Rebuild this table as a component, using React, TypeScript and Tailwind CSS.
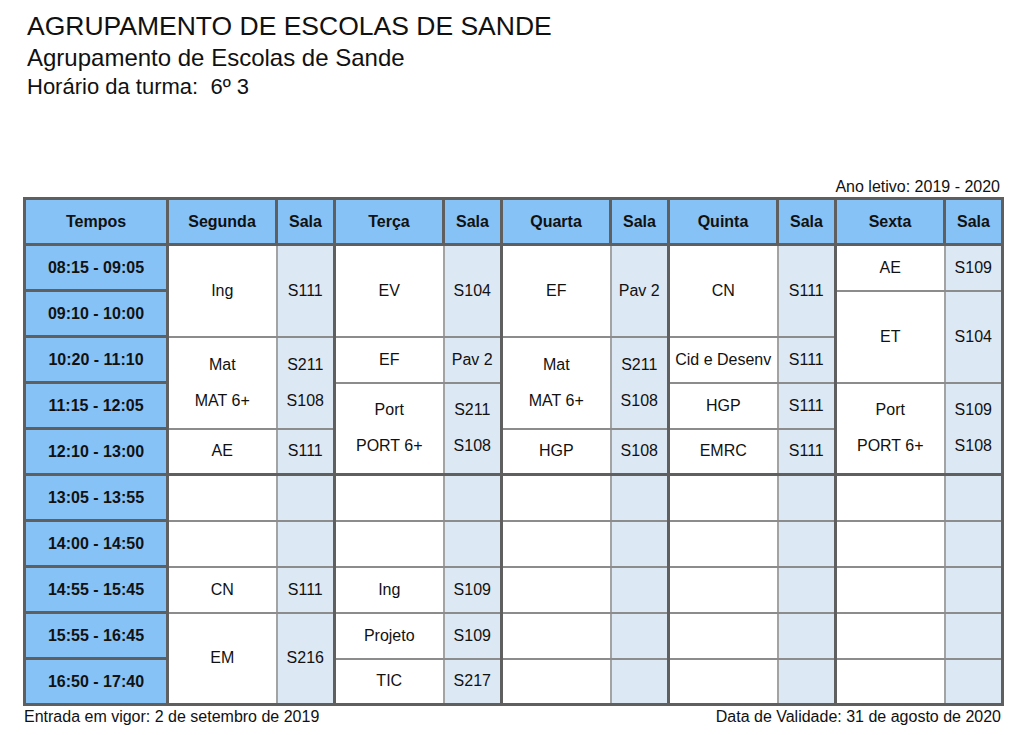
import React from 'react';

type Block = { span: number; s: string[]; r: string[] };
type Day = { name: string; blocks: Block[] };

const TIMES = [
  '08:15 - 09:05',
  '09:10 - 10:00',
  '10:20 - 11:10',
  '11:15 - 12:05',
  '12:10 - 13:00',
  '13:05 - 13:55',
  '14:00 - 14:50',
  '14:55 - 15:45',
  '15:55 - 16:45',
  '16:50 - 17:40',
];

const E = (span = 1): Block => ({ span, s: [], r: [] });

const DAYS: Day[] = [
  {
    name: 'Segunda',
    blocks: [
      { span: 2, s: ['Ing'], r: ['S111'] },
      { span: 2, s: ['Mat', 'MAT 6+'], r: ['S211', 'S108'] },
      { span: 1, s: ['AE'], r: ['S111'] },
      E(),
      E(),
      { span: 1, s: ['CN'], r: ['S111'] },
      { span: 2, s: ['EM'], r: ['S216'] },
    ],
  },
  {
    name: 'Terça',
    blocks: [
      { span: 2, s: ['EV'], r: ['S104'] },
      { span: 1, s: ['EF'], r: ['Pav 2'] },
      { span: 2, s: ['Port', 'PORT 6+'], r: ['S211', 'S108'] },
      E(),
      E(),
      { span: 1, s: ['Ing'], r: ['S109'] },
      { span: 1, s: ['Projeto'], r: ['S109'] },
      { span: 1, s: ['TIC'], r: ['S217'] },
    ],
  },
  {
    name: 'Quarta',
    blocks: [
      { span: 2, s: ['EF'], r: ['Pav 2'] },
      { span: 2, s: ['Mat', 'MAT 6+'], r: ['S211', 'S108'] },
      { span: 1, s: ['HGP'], r: ['S108'] },
      E(), E(), E(), E(), E(),
    ],
  },
  {
    name: 'Quinta',
    blocks: [
      { span: 2, s: ['CN'], r: ['S111'] },
      { span: 1, s: ['Cid e Desenv'], r: ['S111'] },
      { span: 1, s: ['HGP'], r: ['S111'] },
      { span: 1, s: ['EMRC'], r: ['S111'] },
      E(), E(), E(), E(), E(),
    ],
  },
  {
    name: 'Sexta',
    blocks: [
      { span: 1, s: ['AE'], r: ['S109'] },
      { span: 2, s: ['ET'], r: ['S104'] },
      { span: 2, s: ['Port', 'PORT 6+'], r: ['S109', 'S108'] },
      E(), E(), E(), E(), E(),
    ],
  },
];

// block starting at a given row, per day
function startsAt(day: Day, row: number) {
  let r = 0;
  for (const b of day.blocks) {
    if (r === row) return { b, end: r + b.span - 1 };
    r += b.span;
  }
  return null;
}

const Lines = ({ items }: { items: string[] }) => (
  <div className="flex flex-col items-center gap-[18px]">
    {items.map((t) => (
      <span key={t} className="leading-[18px]">{t}</span>
    ))}
  </div>
);

export default function App() {
  return (
    <div className="w-[1024px] h-[735px] bg-white text-[#111] font-['Liberation_Sans',Arial,sans-serif]">
      <div className="pl-[27px] pt-[11px]">
        <div className="text-[26.5px] leading-[30px]">AGRUPAMENTO DE ESCOLAS DE SANDE</div>
        <div className="text-[24px] leading-[30px] mt-[2px]">Agrupamento de Escolas de Sande</div>
        <div className="text-[22px] leading-[28px]">Horário da turma:&nbsp; 6º 3</div>
      </div>

      <div className="ml-[23px] w-[979px] mt-[77px]">
        <div className="text-right text-[16px] leading-[18px] pr-[2px]">Ano letivo: 2019 - 2020</div>
        <table className="mt-[1px] w-[979px] table-fixed border-collapse border-[3px] border-[#5f5f5f] text-[16px] text-center">
          <colgroup>
            <col className="w-[143px]" />
            {DAYS.map((d) => (
              <React.Fragment key={d.name}>
                <col className="w-[109px]" />
                <col className="w-[58px]" />
              </React.Fragment>
            ))}
          </colgroup>
          <thead>
            <tr className="h-[46px]">
              <th className="border-[3px] border-[#5f5f5f] bg-[#86c2f6] font-bold">Tempos</th>
              {DAYS.map((d) => (
                <React.Fragment key={d.name}>
                  <th className="border-[3px] border-[#5f5f5f] bg-[#86c2f6] font-bold">{d.name}</th>
                  <th className="border-[3px] border-[#5f5f5f] bg-[#86c2f6] font-bold">Sala</th>
                </React.Fragment>
              ))}
            </tr>
          </thead>
          <tbody>
            {TIMES.map((t, i) => (
              <tr key={t} className="h-[46px]">
                <td className="border-[3px] border-[#5f5f5f] bg-[#86c2f6] font-bold">{t}</td>
                {DAYS.map((d) => {
                  const st = startsAt(d, i);
                  if (!st) return null;
                  const lunch = st.end === 4;
                  const bottom = lunch ? 'border-b-[3px] border-b-[#5f5f5f]' : 'border-b-2 border-b-[#8c8c8c]';
                  return (
                    <React.Fragment key={d.name}>
                      <td
                        rowSpan={st.b.span}
                        className={`border-l-[3px] border-l-[#5f5f5f] border-r-2 border-r-[#a3a3a3] border-t-2 border-t-[#8c8c8c] ${bottom} bg-white whitespace-nowrap`}
                      >
                        <Lines items={st.b.s} />
                      </td>
                      <td
                        rowSpan={st.b.span}
                        className={`border-r-[3px] border-r-[#5f5f5f] border-l-2 border-l-[#a3a3a3] border-t-2 border-t-[#8c8c8c] ${bottom} bg-[#dde8f5]`}
                      >
                        <Lines items={st.b.r} />
                      </td>
                    </React.Fragment>
                  );
                })}
              </tr>
            ))}
          </tbody>
        </table>
        <div className="flex justify-between text-[16px] leading-[18px] mt-[2px] px-[1px]">
          <span>Entrada em vigor: 2 de setembro de 2019</span>
          <span>Data de Validade: 31 de agosto de 2020</span>
        </div>
      </div>
    </div>
  );
}
